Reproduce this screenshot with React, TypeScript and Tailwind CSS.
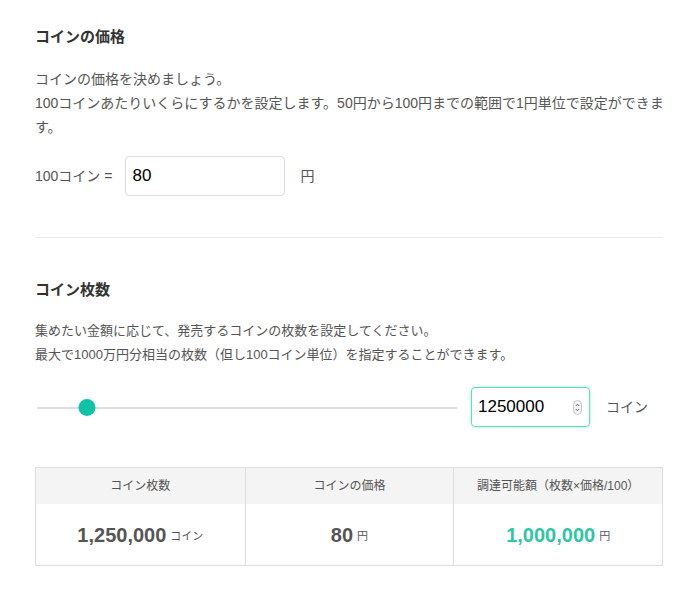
import { useState } from "react";

const font = {
  fontFamily: '"Liberation Sans", "Noto Sans CJK JP", sans-serif',
};

function Spinner() {
  return (
    <svg width="9" height="15" viewBox="0 0 9 15" className="shrink-0">
      <rect x="0.5" y="0.5" width="8" height="14" rx="4" fill="#f3f3f3" stroke="#c8c8c8" />
      <path d="M2.8 6 L4.5 4.2 L6.2 6" fill="none" stroke="#666" strokeWidth="1" />
      <path d="M2.8 9 L4.5 10.8 L6.2 9" fill="none" stroke="#666" strokeWidth="1" />
    </svg>
  );
}

export default function App() {
  const [price, setPrice] = useState("80");
  const [coins, setCoins] = useState("1250000");

  const percent = 12;

  return (
    <div className="min-h-[592px] w-[698px] bg-white px-[35px] text-[#555]" style={font}>
      {/* コインの価格 */}
      <section className="pt-[27px]">
        <h2 className="text-[15px] font-bold leading-5 text-[#333]">コインの価格</h2>
        <p className="mt-5 text-[14px] leading-6">
          コインの価格を決めましょう。
          <br />
          <span className="whitespace-nowrap">
            100コインあたりいくらにするかを設定します。50円から100円までの範囲で1円単位で設定ができま
          </span>
          <br />
          す。
        </p>
        <div className="mt-[17px] flex items-center">
          <span className="text-[14px]">100コイン =</span>
          <input
            value={price}
            onChange={(e) => setPrice(e.target.value)}
            className="ml-[13px] h-10 w-40 rounded-[4px] border border-[#dcdcdc] px-[6px] text-[17px] text-black outline-none"
          />
          <span className="ml-[15px] text-[14px]">円</span>
        </div>
      </section>

      <hr className="mt-[41px] border-0 border-t border-[#ececec]" />

      {/* コイン枚数 */}
      <section className="pt-[42px]">
        <h2 className="text-[15px] font-bold leading-5 text-[#333]">コイン枚数</h2>
        <p className="mt-[19px] text-[13px] leading-6">
          集めたい金額に応じて、発売するコインの枚数を設定してください。
          <br />
          最大で1000万円分相当の枚数（但し100コイン単位）を指定することができます。
        </p>

        <div className="mt-5 flex items-center">
          <div className="relative ml-[2px] h-10 w-[420px]">
            <div className="absolute left-0 right-0 top-[20px] h-[2px] bg-[#dddddd]" />
            <div
              className="absolute top-[12px] h-[17px] w-[17px] -translate-x-1/2 rounded-full bg-[#0fc3a9]"
              style={{ left: `${percent}%` }}
            />
          </div>
          <div className="ml-[14px] flex h-10 w-[119px] items-center rounded-[4px] border border-[#5fe0b4] pl-[6px] pr-[7px] shadow-[0_0_3px_rgba(80,220,170,0.6)]">
            <input
              value={coins}
              onChange={(e) => setCoins(e.target.value)}
              className="w-0 flex-1 text-[17px] text-black outline-none"
            />
            <Spinner />
          </div>
          <span className="ml-[16px] text-[14px]">コイン</span>
        </div>

        <div className="mt-10 grid grid-cols-3 border border-[#dddddd]">
          <div className="flex h-[36px] items-center justify-center bg-[#f4f4f4] text-[12px]">コイン枚数</div>
          <div className="flex h-[36px] items-center justify-center border-l border-[#dddddd] bg-[#f4f4f4] text-[12px]">
            コインの価格
          </div>
          <div className="flex h-[36px] items-center justify-center border-l border-[#dddddd] bg-[#f4f4f4] text-[12px]">
            調達可能額（枚数×価格/100）
          </div>
          <div className="flex h-[61px] items-center justify-center gap-[4px]">
            <span className="text-[20px] font-bold text-[#555]">1,250,000</span>
            <span className="mt-[3px] text-[11px]">コイン</span>
          </div>
          <div className="flex h-[61px] items-center justify-center gap-[4px] border-l border-[#dddddd]">
            <span className="text-[20px] font-bold text-[#555]">80</span>
            <span className="mt-[3px] text-[11px]">円</span>
          </div>
          <div className="flex h-[61px] items-center justify-center gap-[4px] border-l border-[#dddddd]">
            <span className="text-[20px] font-bold text-[#2fc6a4]">1,000,000</span>
            <span className="mt-[3px] text-[11px]">円</span>
          </div>
        </div>
      </section>
    </div>
  );
}
